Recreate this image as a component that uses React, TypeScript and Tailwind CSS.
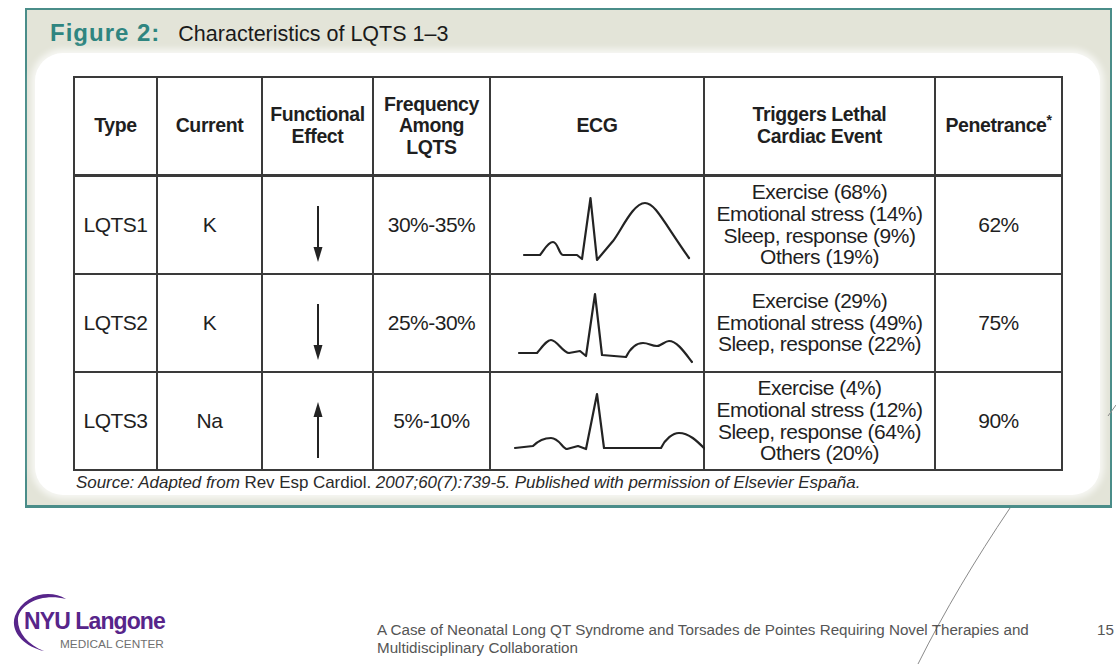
import React from 'react';

const ink = '#232323';

const Arrow = ({ up }: { up?: boolean }) => (
  <svg width="16" height="56" viewBox="0 0 16 56" className="mx-auto block">
    {up ? (
      <>
        <line x1="8" y1="12" x2="8" y2="56" stroke={ink} strokeWidth="2" />
        <polygon points="3.5,15 12.5,15 8,0" fill={ink} />
      </>
    ) : (
      <>
        <line x1="8" y1="0" x2="8" y2="44" stroke={ink} strokeWidth="2" />
        <polygon points="3.5,41 12.5,41 8,56" fill={ink} />
      </>
    )}
  </svg>
);

const Ecg = ({ d }: { d: string }) => (
  <svg width="214" height="96" viewBox="0 0 214 96" className="block">
    <path d={d} fill="none" stroke={ink} strokeWidth="2.2" strokeLinejoin="round" strokeLinecap="round" />
  </svg>
);

const rows = [
  {
    type: 'LQTS1',
    current: 'K',
    up: false,
    freq: '30%-35%',
    ecg: 'M33 78 H49 C53 73 57 65 62 65 C67 65 68 78 72 78 H86 L91 82 L99.5 21 L106 83 L122 64 C130 54 142 26 154 26 C164 26 172 44 198 81',
    triggers: ['Exercise (68%)', 'Emotional stress (14%)', 'Sleep, response (9%)', 'Others (19%)'],
    pen: '62%',
  },
  {
    type: 'LQTS2',
    current: 'K',
    up: false,
    freq: '25%-30%',
    ecg: 'M28 78 H46 C52 71 56 65 60 65 C66 65 72 78 78 78 L89 76 L95 81 L104 19 L111 80 L135 82 C140 72 146 68 152 68 C158 68 160 71 166 71 C170 71 174 66 178 66 C186 66 194 78 201 87',
    triggers: ['Exercise (29%)', 'Emotional stress (49%)', 'Sleep, response (22%)'],
    pen: '75%',
  },
  {
    type: 'LQTS3',
    current: 'Na',
    up: true,
    freq: '5%-10%',
    ecg: 'M24 75 L42 73 C48 67 54 65 60 65 C68 65 72 76 76 76 L87 73 L95 76 L106 21 L113 75 H170 C174 66 182 60 188 60 C198 60 206 68 214 76',
    triggers: ['Exercise (4%)', 'Emotional stress (12%)', 'Sleep, response (64%)', 'Others (20%)'],
    pen: '90%',
  },
];

const th = 'border-2 border-[#3a3a3a] border-b-[3px] font-bold text-[19.5px] leading-[21.5px] tracking-[-0.4px] text-center align-middle';
const td = 'border-2 border-[#3a3a3a] text-[21px] leading-[21.7px] tracking-[-0.5px] text-center align-middle';

export default function App() {
  return (
    <div className="relative w-[1116px] h-[664px] overflow-hidden bg-white font-['Liberation_Sans',Arial,sans-serif] text-[#1f1f1f]">
      <div className="ml-[25px] mt-[8px] w-[1087px] h-[500px] border-2 border-b-[3px] border-[#4a8d89] bg-[#e3e4d8] flex flex-col">
        <div className="h-[43px] pl-[23px] pt-[11px] flex items-baseline gap-[18px]">
          <span className="text-[24px] font-bold text-[#2f8580] tracking-[1px] leading-none">Figure 2:</span>
          <span className="text-[21.5px] leading-none text-[#1a1a1a]">Characteristics of LQTS 1–3</span>
        </div>
        <div className="ml-[8px] mr-[10px] mb-[10px] flex-1 rounded-[28px] bg-white pl-[38px] pt-[23px] shadow-[0_0_6px_4px_rgba(255,255,255,0.7)]">
          <table className="table-fixed border-collapse w-[988px]">
            <colgroup>
              <col className="w-[83px]" />
              <col className="w-[105px]" />
              <col className="w-[111px]" />
              <col className="w-[117px]" />
              <col className="w-[214px]" />
              <col className="w-[231px]" />
              <col className="w-[127px]" />
            </colgroup>
            <thead>
              <tr className="h-[98px]">
                <th className={th}>Type</th>
                <th className={th}>Current</th>
                <th className={th}>
                  Functional
                  <br />
                  Effect
                </th>
                <th className={th}>
                  Frequency
                  <br />
                  Among
                  <br />
                  LQTS
                </th>
                <th className={th}>ECG</th>
                <th className={th}>
                  Triggers Lethal
                  <br />
                  Cardiac Event
                </th>
                <th className={th}>
                  Penetrance<sup className="text-[14px]">*</sup>
                </th>
              </tr>
            </thead>
            <tbody>
              {rows.map((r) => (
                <tr key={r.type} className="h-[98px]">
                  <td className={td}>{r.type}</td>
                  <td className={td}>{r.current}</td>
                  <td className={td + ' pt-[18px]'}>
                    <Arrow up={r.up} />
                  </td>
                  <td className={td}>{r.freq}</td>
                  <td className="border-2 border-[#3a3a3a] p-0 align-top">
                    <Ecg d={r.ecg} />
                  </td>
                  <td className={td}>
                    {r.triggers.map((t) => (
                      <div key={t}>{t}</div>
                    ))}
                  </td>
                  <td className={td}>{r.pen}</td>
                </tr>
              ))}
            </tbody>
          </table>
          <p className="mt-[3px] pl-[3px] text-[17px] leading-[18px] tracking-[-0.05px] italic text-[#2a2a2a]">
            Source: Adapted from <span className="not-italic">Rev Esp Cardiol.</span> 2007;60(7):739-5. Published with
            permission of Elsevier España.
          </p>
        </div>
      </div>

      <svg className="absolute left-0 top-0 pointer-events-none" width="1116" height="664" viewBox="0 0 1116 664">
        <path d="M1010 508 C975 560 945 610 918 664" fill="none" stroke="#8a8a8a" strokeWidth="1" />
        <path d="M1108 416 L1116 405" fill="none" stroke="#8a8a8a" strokeWidth="1" />
      </svg>

      <div className="absolute left-[10px] top-[590px] w-[170px] h-[64px]">
        <svg className="absolute left-0 top-0" width="80" height="64" viewBox="0 0 80 64">
          <path
            d="M56 9 C40 -1 14 4 5 26 C0 40 12 56 34 61 C17 54 7 42 8 28 C11 12 34 3 56 9 Z"
            fill="#57258a"
          />
        </svg>
        <div className="absolute left-[14px] top-[20px] text-[23px] leading-none font-bold tracking-[-0.9px] text-[#57258a] whitespace-nowrap">
          NYU Langone
        </div>
        <div className="absolute left-[50px] top-[49px] text-[11.8px] leading-none text-[#6f6f6f] whitespace-nowrap">
          MEDICAL CENTER
        </div>
      </div>

      <div className="absolute left-[377px] top-[621px] text-[15.2px] leading-[18px] text-[#555555] whitespace-nowrap">
        A Case of Neonatal Long QT Syndrome and Torsades de Pointes Requiring Novel Therapies and
        <br />
        Multidisciplinary Collaboration
      </div>
      <div className="absolute left-[1097px] top-[621px] text-[15.2px] leading-[18px] text-[#555555]">15</div>
    </div>
  );
}
